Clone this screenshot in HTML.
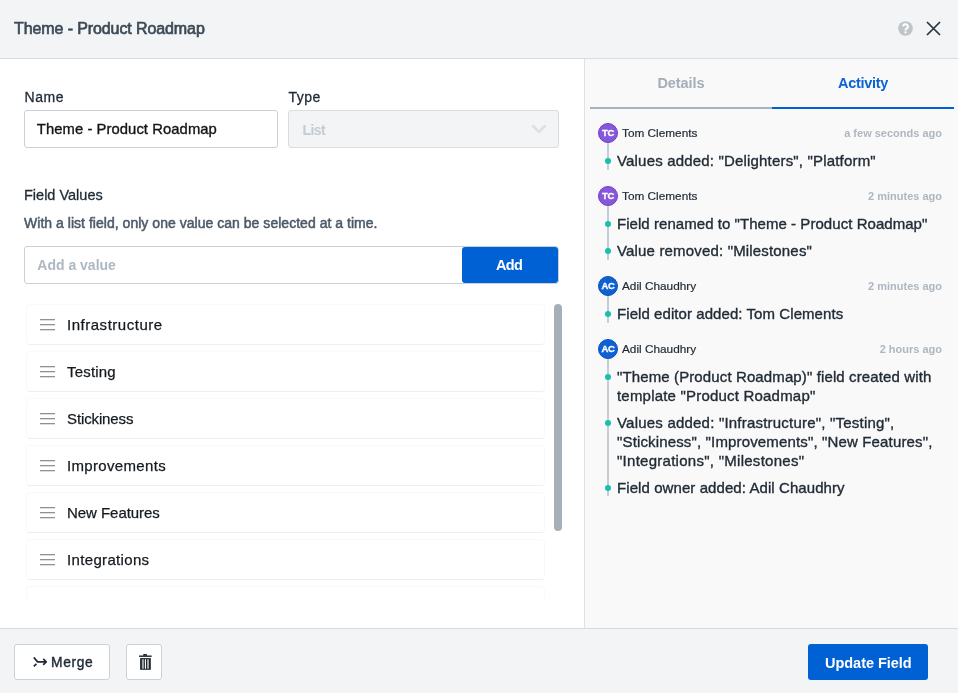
<!DOCTYPE html>
<html><head><meta charset="utf-8">
<style>
*{box-sizing:border-box;margin:0;padding:0}
html,body{width:958px;height:693px;overflow:hidden;background:#fff;font-family:"Liberation Sans",sans-serif}
.abs{position:absolute}
#hdr,#left,#right,#ftr{will-change:transform}
.t{position:absolute;white-space:nowrap;line-height:1}
#hdr{left:0;top:0;width:958px;height:59px;background:#f3f4f6;border-bottom:1px solid #d6dce1}
#left{left:0;top:59px;width:585px;height:569px;background:#fff;border-right:1px solid #dde2e6}
#right{left:585px;top:59px;width:373px;height:569px;background:#f9f9fa}
#ftr{left:0;top:628px;width:958px;height:65px;background:#f3f4f6;border-top:1px solid #d6dce1}
.box{position:absolute;border:1px solid #c9d1d8;border-radius:3px;background:#fff}
.item{position:absolute;left:26px;width:519px;height:41px;border:1px solid #f9f9fa;border-bottom-color:#efeff0;border-radius:4px;background:#fff}
.ham{position:absolute;left:13px;top:14px;width:16px;height:12px}
.ham i{position:absolute;left:0;width:15px;height:1px;background:#8d9298;box-shadow:0 1px 0 rgba(141,146,152,0.3)}
.itxt{position:absolute;left:40px;top:12.3px;font-size:15px;color:#151a1f;white-space:nowrap;line-height:1;letter-spacing:0.1px;-webkit-text-stroke:0.25px #151a1f}
.av{position:absolute;width:20px;height:20px;border-radius:50%;color:#fff;font-size:9.5px;font-weight:700;text-align:center;line-height:17.5px;letter-spacing:-0.3px;-webkit-text-stroke:0.3px #fff}
.tc{background:#8657d9;border:1px solid #6f3fcd}
.ac{background:#0e61d2;border:1px solid #0852b8}
.nm{position:absolute;left:37px;font-size:11.8px;color:#1f2933;white-space:nowrap;line-height:1;-webkit-text-stroke:0.2px #1f2933}
.ts{position:absolute;right:16px;font-size:11px;font-weight:700;color:#aeb7bf;white-space:nowrap;line-height:1;text-align:right}
.vl{position:absolute;left:22px;width:2px;background:#c6ced5}
.dot{position:absolute;left:20px;width:6px;height:6px;border-radius:50%;background:#17bfae}
.at{position:absolute;left:32px;font-size:15px;color:#222c36;white-space:nowrap;line-height:19px;letter-spacing:0.15px;-webkit-text-stroke:0.35px #222c36}
.semi{-webkit-text-stroke:0.3px currentColor}
</style></head><body>
<div id="hdr" class="abs">
  <div class="t" style="left:14px;top:20.6px;font-size:16px;color:#3c4955;letter-spacing:-0.1px;-webkit-text-stroke:0.65px #3c4955">Theme - Product Roadmap</div>
  <svg class="abs" style="left:898px;top:21px" width="15" height="15" viewBox="0 0 15 15"><circle cx="7.5" cy="7.5" r="7.3" fill="#bfc4c9"/><path d="M5.2 5.6a2.3 2.3 0 1 1 3.2 2.1c-.6.3-.9.6-.9 1.3v.4" fill="none" stroke="#fff" stroke-width="2"/><circle cx="7.5" cy="11.4" r="1.15" fill="#fff"/></svg>
  <svg class="abs" style="left:926px;top:20.6px" width="15" height="15" viewBox="0 0 15 15"><path d="M1 1L14 14M14 1L1 14" stroke="#29333d" stroke-width="1.7" fill="none"/></svg>
</div>

<div id="left" class="abs">
  <div class="t semi" style="left:24.5px;top:31px;font-size:14px;letter-spacing:0.6px;color:#1f2a35">Name</div>
  <div class="t semi" style="left:288.5px;top:31px;font-size:14px;letter-spacing:0.45px;color:#1f2a35">Type</div>
  <div class="box" style="left:24px;top:51px;width:254px;height:38px"></div>
  <div class="t" style="left:36.8px;top:62.7px;font-size:14.8px;letter-spacing:0.07px;color:#141414;-webkit-text-stroke:0.35px #141414">Theme - Product Roadmap</div>
  <div class="box" style="left:288px;top:51px;width:271px;height:38px;background:#f3f4f6;border-color:#d8dde2"></div>
  <div class="t" style="left:302.6px;top:64px;font-size:14px;letter-spacing:-0.6px;font-weight:700;color:#c3cbd3">List</div>
  <svg class="abs" style="left:531px;top:65px" width="16" height="10" viewBox="0 0 16 10"><path d="M1.5 1.5L8 8L14.5 1.5" stroke="#dce0e4" stroke-width="2.6" fill="none"/></svg>

  <div class="t semi" style="left:24px;top:129px;font-size:14.5px;color:#1f2a35">Field Values</div>
  <div class="t" style="left:24px;top:157.2px;font-size:14px;letter-spacing:0.03px;color:#4b5a68;-webkit-text-stroke:0.5px #4b5a68">With a list field, only one value can be selected at a time.</div>

  <div class="box" style="left:24px;top:187px;width:535px;height:38px"></div>
  <div class="t" style="left:37.3px;top:198.6px;font-size:14px;font-weight:700;color:#aeb8c1">Add a value</div>
  <div class="abs" style="left:462px;top:188px;width:96px;height:36px;background:#0061d5;border-radius:3px"></div>
  <div class="t" style="left:496px;top:199.1px;font-size:14.5px;letter-spacing:-0.7px;font-weight:700;color:#fff">Add</div>

  <div class="abs" style="left:0;top:244px;width:584px;height:295px;overflow:hidden">
    <div class="item" style="top:1px"><div class="ham"><i style="top:0"></i><i style="top:5px"></i><i style="top:10px"></i></div><div class="itxt" style="letter-spacing:0.52px">Infrastructure</div></div>
    <div class="item" style="top:48px"><div class="ham"><i style="top:0"></i><i style="top:5px"></i><i style="top:10px"></i></div><div class="itxt" style="letter-spacing:0.18px">Testing</div></div>
    <div class="item" style="top:95px"><div class="ham"><i style="top:0"></i><i style="top:5px"></i><i style="top:10px"></i></div><div class="itxt" style="letter-spacing:-0.12px">Stickiness</div></div>
    <div class="item" style="top:142px"><div class="ham"><i style="top:0"></i><i style="top:5px"></i><i style="top:10px"></i></div><div class="itxt" style="letter-spacing:0.33px">Improvements</div></div>
    <div class="item" style="top:189px"><div class="ham"><i style="top:0"></i><i style="top:5px"></i><i style="top:10px"></i></div><div class="itxt" style="letter-spacing:-0.05px">New Features</div></div>
    <div class="item" style="top:236px"><div class="ham"><i style="top:0"></i><i style="top:5px"></i><i style="top:10px"></i></div><div class="itxt" style="letter-spacing:0.34px">Integrations</div></div>
    <div class="item" style="top:283px"><div class="ham"><i style="top:0"></i><i style="top:5px"></i><i style="top:10px"></i></div><div class="itxt">Milestones</div></div>
  </div>
  <div class="abs" style="left:554px;top:245px;width:8px;height:227px;background:#a6afb7;border-radius:4px"></div>
</div>

<div id="right" class="abs">
  <div class="abs" style="left:5px;top:48px;width:182px;height:2px;background:#a8b2bb"></div>
  <div class="abs" style="left:187px;top:48px;width:182px;height:2px;background:#0061d5"></div>
  <div class="t" style="left:5px;width:182px;text-align:center;top:16.6px;font-size:14.5px;letter-spacing:-0.05px;font-weight:700;color:#a3aeb8">Details</div>
  <div class="t" style="left:187px;width:182px;text-align:center;top:16.6px;font-size:14.5px;letter-spacing:-0.3px;font-weight:700;color:#0a64d3">Activity</div>

  <!-- entry 1 -->
  <div class="vl" style="top:74px;height:37px"></div>
  <div class="av tc" style="left:13px;top:64px">TC</div>
  <div class="nm" style="top:69px">Tom Clements</div>
  <div class="ts" style="top:69px">a few seconds ago</div>
  <div class="dot" style="top:99px"></div>
  <div class="at" style="top:92.3px;letter-spacing:0.18px">Values added: "Delighters", "Platform"</div>

  <!-- entry 2 -->
  <div class="vl" style="top:137px;height:64px"></div>
  <div class="av tc" style="left:13px;top:127px">TC</div>
  <div class="nm" style="top:132px">Tom Clements</div>
  <div class="ts" style="top:132px">2 minutes ago</div>
  <div class="dot" style="top:162px"></div>
  <div class="at" style="top:155.3px;letter-spacing:0.05px">Field renamed to "Theme - Product Roadmap"</div>
  <div class="dot" style="top:189px"></div>
  <div class="at" style="top:182.3px;letter-spacing:0.17px">Value removed: "Milestones"</div>

  <!-- entry 3 -->
  <div class="vl" style="top:227px;height:37px"></div>
  <div class="av ac" style="left:13px;top:217px">AC</div>
  <div class="nm" style="top:222px">Adil Chaudhry</div>
  <div class="ts" style="top:222px">2 minutes ago</div>
  <div class="dot" style="top:252px"></div>
  <div class="at" style="top:245.3px;letter-spacing:0.07px">Field editor added: Tom Clements</div>

  <!-- entry 4 -->
  <div class="vl" style="top:290px;height:147px"></div>
  <div class="av ac" style="left:13px;top:280px">AC</div>
  <div class="nm" style="top:285px">Adil Chaudhry</div>
  <div class="ts" style="top:285px">2 hours ago</div>
  <div class="dot" style="top:315px"></div>
  <div class="at" style="top:308.3px;letter-spacing:0.12px">"Theme (Product Roadmap)" field created with</div>
  <div class="at" style="top:327.3px;letter-spacing:0.2px">template "Product Roadmap"</div>
  <div class="dot" style="top:361px"></div>
  <div class="at" style="top:354.3px;letter-spacing:0.21px">Values added: "Infrastructure", "Testing",</div>
  <div class="at" style="top:373.3px;letter-spacing:0.15px">"Stickiness", "Improvements", "New Features",</div>
  <div class="at" style="top:392.3px;letter-spacing:0.27px">"Integrations", "Milestones"</div>
  <div class="dot" style="top:426px"></div>
  <div class="at" style="top:419.3px;letter-spacing:0.08px">Field owner added: Adil Chaudhry</div>
</div>

<div id="ftr" class="abs">
  <div class="box" style="left:14px;top:15px;width:96px;height:36px;border-color:#cbd3d9"></div>
  <svg class="abs" style="left:33px;top:28px" width="15" height="12" viewBox="0 0 15 12"><path d="M0.8 0.4L4.6 4.9H13M10.2 1.9L13.2 4.9L10.2 7.9M0.8 9.4L3.4 6.8" stroke="#1f2a35" stroke-width="1.7" fill="none" stroke-linejoin="round"/></svg>
  <div class="t" style="left:51.1px;top:26.9px;font-size:13.8px;letter-spacing:0.6px;color:#1f2a35;-webkit-text-stroke:0.4px #1f2a35">Merge</div>
  <div class="box" style="left:126px;top:15px;width:36px;height:36px;border-color:#cbd3d9"></div>
  <svg class="abs" style="left:136px;top:21px" width="20" height="22" viewBox="0 0 20 22"><rect x="3" y="5.5" width="12.7" height="1.4" fill="#1f262d"/><path d="M7.1 5.7V4.9Q7.1 4.1 7.9 4.1H10.3Q11.1 4.1 11.1 4.9V5.7Z" fill="#1f262d"/><rect x="4.1" y="8.1" width="10.7" height="11.7" fill="#1f262d"/><rect x="5.9" y="9.2" width="2" height="9.5" fill="#a3a7ab"/><rect x="8.9" y="9.2" width="1.1" height="9.5" fill="#fff"/><rect x="11" y="9.2" width="2" height="9.5" fill="#a3a7ab"/></svg>
  <div class="abs" style="left:808px;top:15px;width:120px;height:36px;background:#0061d5;border-radius:3px"></div>
  <div class="t" style="left:825px;top:26.9px;font-size:14.5px;letter-spacing:-0.03px;font-weight:700;color:#fff">Update Field</div>
</div>
</body></html>
